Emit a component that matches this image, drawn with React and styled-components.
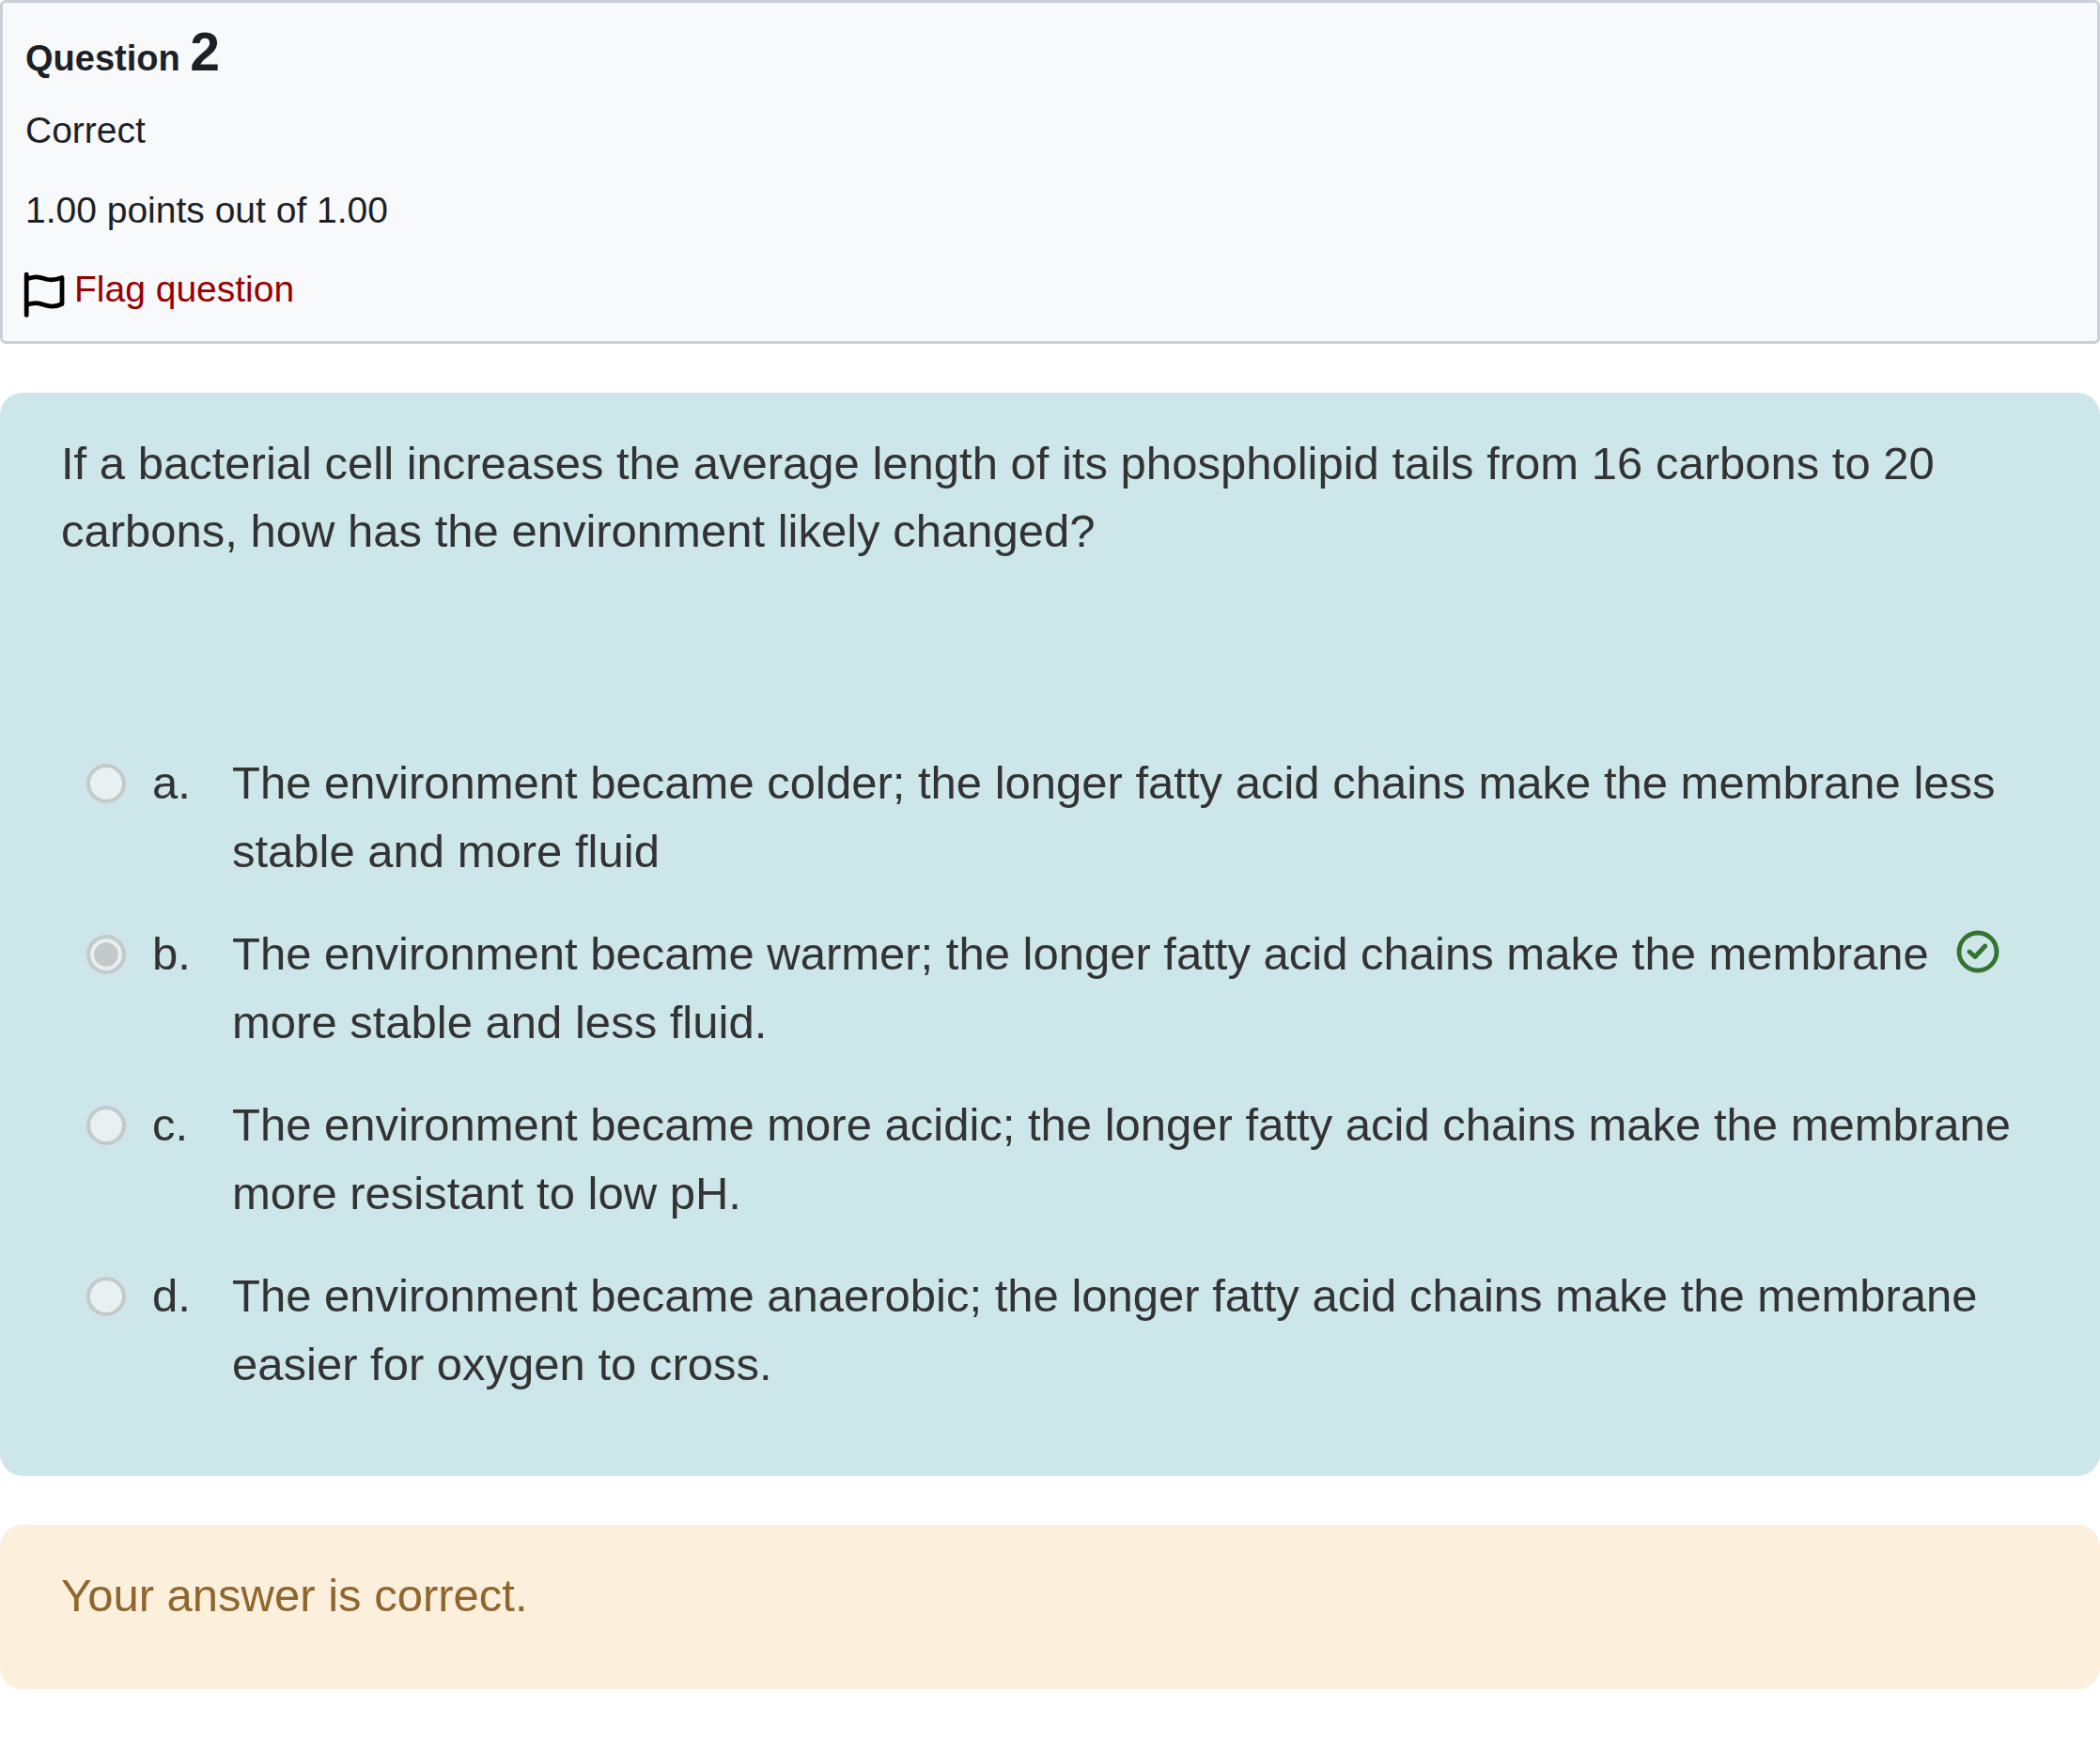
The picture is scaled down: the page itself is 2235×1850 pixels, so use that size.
import styled, { createGlobalStyle } from "styled-components";

const GlobalStyle = createGlobalStyle`
  * {
    box-sizing: border-box;
  }

  body {
    margin: 0;
    background: #fff;
    font-family: "Helvetica Neue", "Liberation Sans", Arial, sans-serif;
  }
`;

const Page = styled.main`
  display: flex;
  flex-direction: column;
  gap: 52px;
`;

const Info = styled.section`
  display: flex;
  flex-direction: column;
  align-items: flex-start;
  padding: 22px 24px 25px;
  border: 3px solid #cad0d7;
  border-radius: 6px;
  background: #f8f9fb;
  color: #1d2125;
  font-size: 39px;
  line-height: 44px;
`;

const Title = styled.h3`
  margin: 0;
  font-size: 38px;
  line-height: 60px;
  font-weight: 700;

  span {
    font-size: 57px;
  }
`;

const State = styled.div`
  margin-top: 25px;
`;

const Grade = styled.div`
  margin-top: 41px;
`;

const FlagLink = styled.a`
  display: flex;
  align-items: flex-start;
  gap: 10px;
  margin-top: 40px;
  color: #900;
  text-decoration: none;

  &:hover {
    text-decoration: underline;
  }

  svg {
    width: 42px;
    height: 48px;
    margin-top: 4px;
    overflow: visible;
  }
`;

const Box = styled.section`
  padding: 39px 65px;
  border-radius: 24px;
  font-size: 49px;
  line-height: 72px;
`;

const Formulation = styled(Box)`
  padding-bottom: 82px;
  background: #cde6ea;
  color: #333;
`;

const Feedback = styled(Box)`
  padding-bottom: 64px;
  background: #fcefdc;
  color: #8f662e;
`;

const QuestionText = styled.p`
  margin: 0 0 196px;
`;

const Answers = styled.fieldset`
  display: flex;
  flex-direction: column;
  gap: 36px;
  margin: 0;
  padding: 0 0 0 27px;
  border: 0;
`;

const Answer = styled.div`
  display: flex;
  align-items: flex-start;
  line-height: 73px;

  label {
    display: flex;
  }
`;

const Radio = styled.input`
  flex: none;
  appearance: none;
  width: 42px;
  height: 42px;
  margin: 16px 28px 0 0;
  border: 4px solid #c4caca;
  border-radius: 50%;
  background: #e8f0f2;

  &:checked {
    padding: 4px;
    background: #c4caca content-box;
    box-shadow: inset 0 0 0 4px #e8f0f2;
  }
`;

const Letter = styled.span`
  flex: none;
  width: 85px;
`;

const CheckIcon = styled.svg`
  flex: none;
  width: 46px;
  height: 46px;
  margin: 11px 42px 0 20px;
`;

const answers = [
  {
    letter: "a",
    text: "The environment became colder; the longer fatty acid chains make the membrane less stable and more fluid",
  },
  {
    letter: "b",
    text: "The environment became warmer; the longer fatty acid chains make the membrane more stable and less fluid.",
    correct: true,
  },
  {
    letter: "c",
    text: "The environment became more acidic; the longer fatty acid chains make the membrane more resistant to low pH.",
  },
  {
    letter: "d",
    text: "The environment became anaerobic; the longer fatty acid chains make the membrane easier for oxygen to cross.",
  },
];

const App = () => {
  return (
    <>
      <GlobalStyle />
      <Page>
        <Info>
          <Title>
            Question <span>2</span>
          </Title>
          <State>Correct</State>
          <Grade>1.00 points out of 1.00</Grade>
          <FlagLink href="#">
            <svg viewBox="2 0 42 48" fill="none" stroke="#000" strokeWidth="4.8" strokeLinecap="round" strokeLinejoin="round">
              <path d="M3.2 2.2v43.2M3.2 7C11 4.500 15 4 22 6.500C28 8.800 33 8.500 41 5.500V33.500C34 37 28 36.800 22 34.500C15 31.800 11 32 3.200 34.500" />
            </svg>
            Flag question
          </FlagLink>
        </Info>
        <Formulation>
          <QuestionText>
            If a bacterial cell increases the average length of its phospholipid tails from 16 carbons to 20
            carbons, how has the environment likely changed?
          </QuestionText>
          <Answers disabled>
            {answers.map(({ letter, text, correct }) => (
              <Answer key={letter}>
                <Radio type="radio" name="answer" id={`answer-${letter}`} defaultChecked={correct} />
                <label htmlFor={`answer-${letter}`}>
                  <Letter>{letter}.</Letter>
                  <span>{text}</span>
                </label>
                {correct && (
                  <CheckIcon viewBox="0 0 46 46" fill="none" stroke="#33752e" strokeWidth="4.8" strokeLinecap="round" strokeLinejoin="round">
                    <circle cx="23" cy="23" r="20" />
                    <path d="M14 23l6 5.500 10.700-11.500" />
                  </CheckIcon>
                )}
              </Answer>
            ))}
          </Answers>
        </Formulation>
        <Feedback>Your answer is correct.</Feedback>
      </Page>
    </>
  );
};

export default App;
